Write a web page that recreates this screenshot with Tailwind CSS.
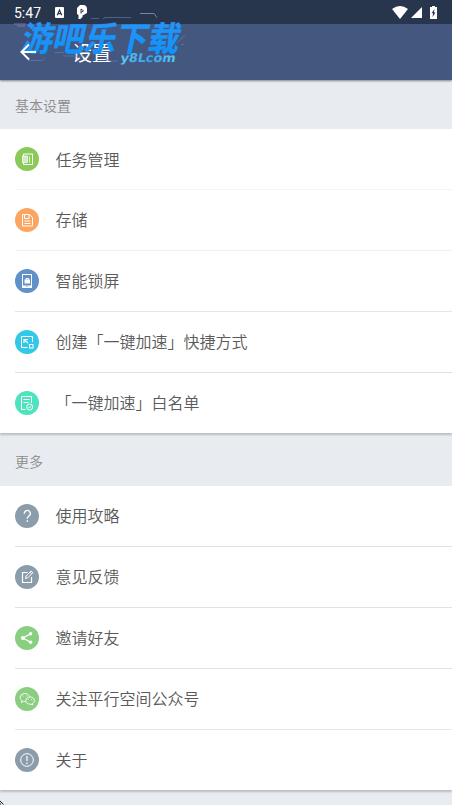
<!DOCTYPE html>
<html lang="zh-CN">
<head>
<meta charset="utf-8">
<title>设置</title>
<script src="https://cdn.jsdelivr.net/npm/@tailwindcss/browser@4"></script>
</head>
<body class="relative w-[452px] h-[805px] overflow-hidden bg-[#e8ebf0] font-['Noto_Sans_CJK_SC',sans-serif] font-[350] text-[#5a5a5a]">
<header class="relative z-10 h-20 bg-[#43577f] shadow-[0_1px_2px_rgba(0,0,0,0.45)]">
  <div class="flex h-6 items-center bg-[#28364d] pl-[14px] pr-[15px] text-white">
    <span class="font-[Roboto,sans-serif] font-normal text-[14px] leading-6 w-[41px] pt-[2px]">5:47</span>
    <svg class="w-[9px] h-[11px]" viewBox="0 0 9 11"><rect width="9" height="11" rx="1" fill="#fff"/><path d="M2.3 8.2 4.5 3 6.7 8.2M3.1 6.7h2.8" fill="none" stroke="#28364d" stroke-width="1.2"/></svg>
    <svg class="ml-[13px] w-[10px] h-[14px]" viewBox="0 0 10 14"><path d="M3 0h3.5A3.500 4 0 0 1 10 4.500V8L5.500 10.500V12L3.500 14H1.500V10L0 9V3Z" fill="#fff"/><path d="M4 4v4.500M4 4l2.500 1.800L4 7.500" fill="none" stroke="#28364d" stroke-width=".9"/></svg>
    <div class="ml-auto flex items-center">
      <svg class="w-4 h-[13px]" viewBox="0 0 16 13"><path d="M0 3Q8-3 16 3L8 13Z" fill="#fff"/></svg>
      <svg class="ml-[3px] w-[11px] h-[11px]" viewBox="0 0 11 11"><path d="M11 0v11H0Z" fill="#fff"/></svg>
      <svg class="ml-2 w-[7px] h-[13px]" viewBox="0 0 7 13"><path d="M2 0h3v1h2v12H0V1h2Z" fill="#fff"/><path d="M4.500 3 1.500 7.300h1.600L2.500 11l3-4.600H4Z" fill="#28364d"/></svg>
    </div>
  </div>
  <div class="flex h-14 items-center pl-5">
    <svg class="relative z-10 w-4 h-[18px]" viewBox="0 0 16 18" fill="none" stroke="#fff" stroke-width="2"><path d="M9 1.500 1.500 9 9 16.500M1.500 9H16"/></svg>
    <h1 class="ml-[36px] pt-[2px] text-[20px] font-normal leading-7 text-white">设置</h1>
  </div>
  <svg class="absolute left-0 top-0 w-[200px] h-20" viewBox="0 0 200 80">
    <defs>
      <linearGradient id="wm" x1="0" y1="0" x2="0" y2="1"><stop offset="0.200" stop-color="#2994f5"/><stop offset="1" stop-color="#0694fb"/></linearGradient>
      <linearGradient id="url" x1="0" x2="1"><stop stop-color="#62c7f3"/><stop offset=".5" stop-color="#35a3ef"/><stop offset="1" stop-color="#58c7f5"/></linearGradient>
    </defs>
    <g fill="none" stroke-width=".8">
      <path d="M140 13.500h14l3 4" stroke="#8b9cc4"/>
      <path d="M91 18.500h8M105 17.500h26M103 19l3-2" stroke="#5b6b9b"/>
      <path d="M14 24h12M17 26h8" stroke="#8a82b8"/>
      <path d="M28 60.500h14l3-3M63 56h20M54 52.500h10M104 58l6 3h8M181 44.500h3M157 27h12M177 43l8-8" stroke="#6276ab"/>
    </g>
    <text transform="translate(20 50.500) skewX(-12) scale(1 1.060)" font-family="Noto Sans CJK SC" font-weight="700" font-size="32" textLength="158" lengthAdjust="spacingAndGlyphs" fill="url(#wm)" stroke="#1793fa" stroke-width=".4">游吧乐下载</text>
    <text transform="translate(120 61.500) skewX(-10)" font-family="DejaVu Sans" font-weight="700" font-size="12" textLength="55" lengthAdjust="spacingAndGlyphs" fill="url(#url)">y8Lcom</text>
  </svg>
</header>

<h2 class="flex h-[49px] items-center pl-[15px] text-[14px] leading-5 text-[#8c8c8c]">基本设置</h2>
<ul class="flex h-[304px] flex-col bg-white pl-[15px] text-[16px] shadow-[0_2px_2px_rgba(0,0,0,0.2)]">
  <li class="flex h-[61px] shrink-0 items-center gap-4 border-b border-[#f4f4f4]">
    <svg class="w-6 h-6" viewBox="0 0 24 24" fill="none" stroke="#fff"><circle cx="12" cy="12" r="12" fill="#8bca58" stroke="none"/><path d="M8.500 9V7h9v10.500h-9v-2"/><rect x="7.500" y="9" width="5" height="6.500" fill="#fff" fill-opacity=".65" stroke-width=".7"/><path d="M14.500 9.500v6" stroke-width=".8"/></svg><span class="pb-[1px] pl-[.5px]">任务管理</span></li>
  <li class="flex h-[61px] shrink-0 items-center gap-4 border-b border-[#f0f0f0]">
    <svg class="w-6 h-6" viewBox="0 0 24 24" fill="none" stroke="#fff"><circle cx="12" cy="12" r="12" fill="#fba660" stroke="none"/><path d="M7.500 6.500h7l3 3v8.500h-10Z"/><path d="M9.500 6.500v4h4.500v-4M9.500 13h6M9.500 15.500h6"/></svg><span class="pb-[2px] pl-[.5px]">存储</span></li>
  <li class="flex h-[61px] shrink-0 items-center gap-4 border-b border-[#e6e6e6]">
    <svg class="w-6 h-6" viewBox="0 0 24 24" fill="none" stroke="#fff"><circle cx="12" cy="12" r="12" fill="#6091c8" stroke="none"/><rect x="7.500" y="5.500" width="9" height="13"/><path d="M7 17.500h10" stroke-width="2"/><rect x="9.500" y="10.500" width="5.500" height="4" fill="#fff" stroke="none"/><path d="M11 11V9.500h2.500V11"/><path d="M11.500 17.500h1" stroke="#6091c8"/></svg><span class="pb-[2px] pl-[.5px]">智能锁屏</span></li>
  <li class="flex h-[61px] shrink-0 items-center gap-4 border-b border-[#e0e0e0]">
    <svg class="w-6 h-6" viewBox="0 0 24 24" fill="none" stroke="#fff"><circle cx="12" cy="12" r="12" fill="#33c8e8" stroke="none"/><path d="M12.500 17.500H6.500v-11h11V12"/><rect x="14.500" y="14.500" width="3.500" height="3.500"/><path d="M9 13V9.500h4M9.500 10l3.500 3" stroke-width="1.100"/></svg><span class="pb-[2px] pl-[.5px]">创建「一键加速」快捷方式</span></li>
  <li class="flex h-[60px] shrink-0 items-center gap-4">
    <svg class="w-6 h-6" viewBox="0 0 24 24" fill="none" stroke="#fff"><circle cx="12" cy="12" r="12" fill="#4ce3bd" stroke="none"/><path d="M10.500 18.500h-4v-13h10V12M8.500 8.500h6M8.500 11.500h5"/><circle cx="14.700" cy="16" r="3"/><path d="m13.300 16 1.100 1.100 1.900-2.200" stroke-width=".9"/></svg><span class="pb-[2px] pl-[.5px]">「一键加速」白名单</span></li>
</ul>

<h2 class="flex h-[53px] items-center pl-[15px] pt-[3px] text-[14px] leading-5 text-[#8c8c8c]">更多</h2>
<ul class="flex h-[304px] flex-col bg-white pl-[15px] text-[16px] shadow-[0_2px_2px_rgba(0,0,0,0.2)]">
  <li class="flex h-[61px] shrink-0 items-center gap-4 border-b border-[#e2e2e2]">
    <svg class="w-6 h-6" viewBox="0 0 24 24" fill="none" stroke="#fff"><circle cx="12" cy="12" r="12" fill="#8b9dab" stroke="none"/><path d="M9.300 9.800a3 3 0 1 1 4.600 2.200q-1.600 1-1.600 2.700M12.300 16.300v1.600" stroke-width="1.300"/></svg><span class="pb-[2px] pl-[.5px]">使用攻略</span></li>
  <li class="flex h-[61px] shrink-0 items-center gap-4 border-b border-[#e2e2e2]">
    <svg class="w-6 h-6" viewBox="0 0 24 24" fill="none" stroke="#fff"><circle cx="12" cy="12" r="12" fill="#8b9dab" stroke="none"/><path d="M12.500 7.500h-5v10h9V12" stroke-width="1.200"/><path d="m10.500 13.500.6-2.500 5-5 1.800 1.700-5 5ZM15 7.300l1.700 1.600"/></svg><span class="pb-[2px] pl-[.5px]">意见反馈</span></li>
  <li class="flex h-[61px] shrink-0 items-center gap-4 border-b border-[#e2e2e2]">
    <svg class="w-6 h-6" viewBox="0 0 24 24" fill="none" stroke="#fff"><circle cx="12" cy="12" r="12" fill="#8ace82" stroke="none"/><path d="m15.700 7.700-7.900 4.300 7.900 4.300" stroke-width="1.300"/><g fill="#fff" stroke="none"><circle cx="7.800" cy="12" r="1.900"/><circle cx="15.600" cy="7.800" r="1.700"/><circle cx="15.600" cy="16.200" r="1.700"/></g></svg><span class="pb-[2px] pl-[.5px]">邀请好友</span></li>
  <li class="flex h-[61px] shrink-0 items-center gap-4 border-b border-[#e8e8e8]">
    <svg class="w-6 h-6" viewBox="0 0 24 24" fill="none" stroke="#fff" stroke-width=".9"><circle cx="12" cy="12" r="12" fill="#8ace82" stroke="none"/><path d="M10.500 14.500q-1 .1-2-.2L6.500 15.500l.4-2C3.700 11 5.200 6.500 9.800 6.500c2.400 0 4.200 1.300 4.600 3.200"/><path d="M15 10c5 0 5.500 5 2.500 6.500l.3 1.500-1.800-.9c-3 .5-5.200-1-5.200-3.400 0-2.100 1.800-3.700 4.200-3.700Z"/><path d="M8 8.500v1M11.200 8.500v1M13.300 12.200v1M16.600 12.200v1"/></svg><span class="pb-[2px] pl-[.5px]">关注平行空间公众号</span></li>
  <li class="flex h-[60px] shrink-0 items-center gap-4">
    <svg class="w-6 h-6" viewBox="0 0 24 24" fill="none" stroke="#fff"><circle cx="12" cy="12" r="12" fill="#8b9dab" stroke="none"/><circle cx="12" cy="12" r="6.300"/><path d="M12 8v5M12 14.500V16" stroke-width="1.200"/></svg><span class="pb-[2px] pl-[.5px]">关于</span></li>
</ul>
<svg class="absolute left-0 bottom-0 w-1 h-1" viewBox="0 0 4 4"><path d="M0 0l3.500 3.500M0 2v2" stroke="#111" stroke-width="1"/></svg>
</body>
</html>
